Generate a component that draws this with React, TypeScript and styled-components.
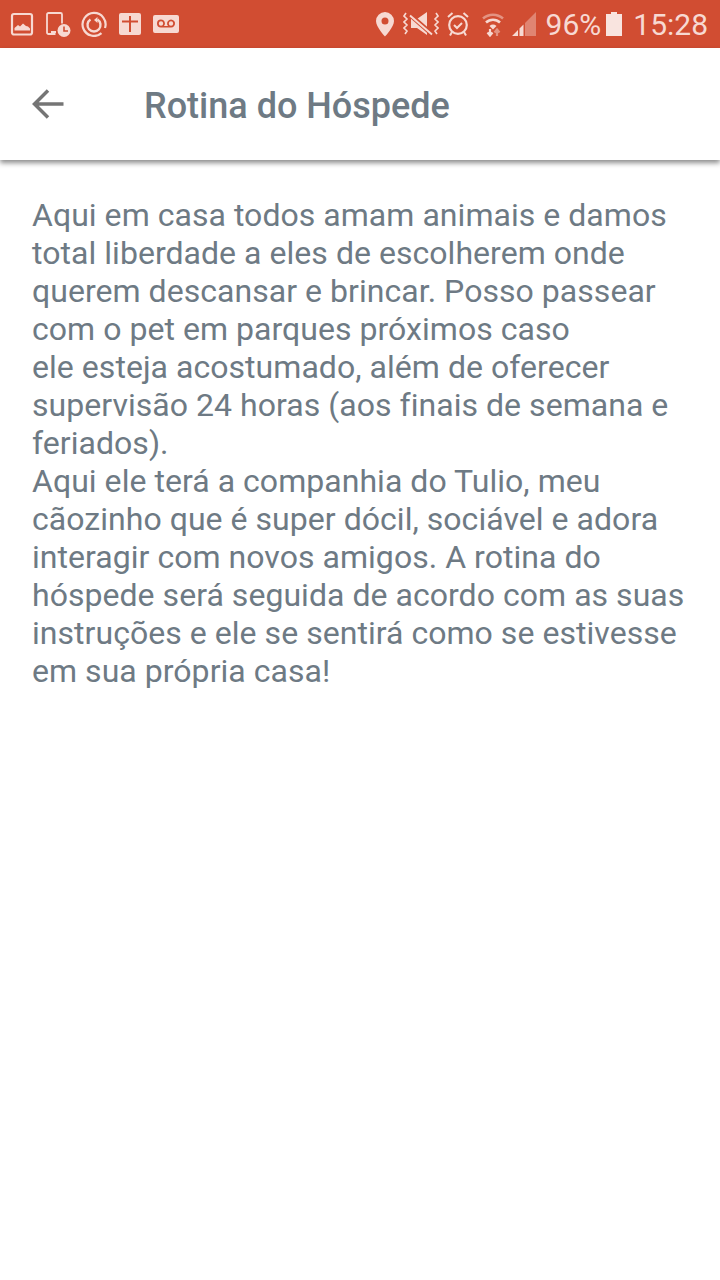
import React from 'react'
import styled, { createGlobalStyle } from 'styled-components'

const GlobalStyle = createGlobalStyle`
  html, body {
    margin: 0;
    padding: 0;
    background: #fff;
    font-family: Roboto, "Noto Sans", sans-serif;
  }
`

const ICON_COLOR = '#f7d9d2'
const BAR_COLOR = '#d14d32'
const TEXT_COLOR = '#6e7a84'

const App = () => (
  <Page>
    <GlobalStyle />
    <StatusBar>
      <StatusLeft>
        <svg width="24" height="26" viewBox="0 0 24 26">
          <rect x="2" y="3" width="20" height="20.500" rx="2" fill="none" stroke={ICON_COLOR} strokeWidth="2.200" />
          <path d="M4.500 19.500v-2.500l3.500-3 2 1.500 3-3 3 2.500 2 .5 2 2v2z" fill={ICON_COLOR} />
        </svg>
        <svg width="27" height="26" viewBox="0 0 27 26">
          <path d="M11.500 23H4.500A1.500 1.500 0 0 1 3 21.500V3.500A1.500 1.500 0 0 1 4.500 2h12A1.500 1.500 0 0 1 18 3.500v9" fill="none" stroke={ICON_COLOR} strokeWidth="1.800" />
          <rect x="7" y="20" width="5" height="2" fill={ICON_COLOR} />
          <circle cx="20" cy="19.500" r="6.500" fill={ICON_COLOR} />
          <path d="M20 15.500v4.500h4" fill="none" stroke={BAR_COLOR} strokeWidth="1.600" />
        </svg>
        <svg width="26" height="26" viewBox="0 0 26 26">
          <path d="M20.500 22.200A11.500 11.500 0 1 1 24 17" fill="none" stroke={ICON_COLOR} strokeWidth="2.200" />
          <path d="M9.500 8.500a6.500 6.500 0 1 0 7 0" fill="none" stroke={ICON_COLOR} strokeWidth="2.400" />
          <path d="M16.500 6v6l-3.500-3z" fill={ICON_COLOR} />
        </svg>
        <svg width="24" height="26" viewBox="0 0 24 26">
          <path
            fillRule="evenodd"
            d="M4 2h18a2 2 0 0 1 2 2v18a2 2 0 0 1-2 2H4a2 2 0 0 1-2-2V4a2 2 0 0 1 2-2zM12 5v4.500H5v2h7V21h2v-9.500h7v-2h-7V5z"
            fill={ICON_COLOR}
          />
        </svg>
        <svg width="28" height="18" viewBox="0 0 28 18">
          <path
            fillRule="evenodd"
            d="M4 0h22a2 2 0 0 1 2 2v14a2 2 0 0 1-2 2H4a2 2 0 0 1-2-2V2a2 2 0 0 1 2-2zM10 4.500a4 4 0 1 0 0 8h10a4 4 0 1 0-3-1.400h-4A4 4 0 0 0 10 4.500zM10 6.300a2.200 2.200 0 1 1 0 4.400 2.200 2.200 0 0 1 0-4.400zM20 6.300a2.200 2.200 0 1 1 0 4.400 2.200 2.200 0 0 1 0-4.400z"
            fill={ICON_COLOR}
          />
        </svg>
      </StatusLeft>
      <StatusRight>
        <svg width="20" height="26" viewBox="0 0 20 26">
          <path
            fillRule="evenodd"
            d="M10 1a9 9 0 0 1 9 9c0 6-9 15.500-9 15.500S1 16 1 10a9 9 0 0 1 9-9zm0 5.500a3.500 3.500 0 1 0 0 7 3.500 3.500 0 0 0 0-7z"
            fill={ICON_COLOR}
          />
        </svg>
        <svg width="36" height="26" viewBox="0 0 36 26">
          <path d="M3 2L1 5l3 3-3 3 3 3-3 3 3 3-2 3M33 2l2 3-3 3 3 3-3 3 3 3-3 3 2 3" fill="none" stroke={ICON_COLOR} strokeWidth="1.600" />
          <path d="M8 8h6l10-7v23l-10-7H8z" fill={ICON_COLOR} />
          <path d="M6 3l24 21" stroke={BAR_COLOR} strokeWidth="4.500" />
          <path d="M7 4.500l22 19" stroke={ICON_COLOR} strokeWidth="2" />
        </svg>
        <svg width="27" height="26" viewBox="0 0 27 26">
          <circle cx="11" cy="14" r="8.800" fill="none" stroke={ICON_COLOR} strokeWidth="2.200" />
          <path d="M7 14l3 3 5-5" fill="none" stroke={ICON_COLOR} strokeWidth="2" />
          <path d="M1 6l4.500-4M21 6l-4.500-4M5 21l-2 3.500M17 21l2 3.500" stroke={ICON_COLOR} strokeWidth="2" />
        </svg>
        <svg width="22" height="26" viewBox="0 0 22 26">
          <path d="M1 7.500a15 15 0 0 1 20 0" fill="none" stroke={ICON_COLOR} strokeOpacity="0.5" strokeWidth="2.500" />
          <path d="M4 11.500a10 10 0 0 1 14 0" fill="none" stroke={ICON_COLOR} strokeWidth="2.500" />
          <path d="M7.500 15a5.500 5.500 0 0 1 7 0L11 18.500z" fill={ICON_COLOR} />
          <path d="M8 18v6M5.500 21.500L8 24.500l2.500-3" fill="none" stroke={ICON_COLOR} strokeWidth="2.200" />
          <path d="M15 25v-6M12.500 21.500L15 18.500l2.500 3" fill="none" stroke={ICON_COLOR} strokeOpacity="0.5" strokeWidth="2.200" />
        </svg>
        <svg width="24" height="24" viewBox="0 0 24 24">
          <path d="M13 11V24H24V0z" fill={ICON_COLOR} fillOpacity="0.4" />
          <path d="M0 24l6-6v6zM7.500 16.500l4-4V24h-4z" fill={ICON_COLOR} />
        </svg>
        <Percent>96%</Percent>
        <svg width="16" height="24" viewBox="0 0 16 24">
          <path d="M5 0h6v2h5v22H0V2h5z" fill="#f9e4df" />
        </svg>
        <Clock>15:28</Clock>
      </StatusRight>
    </StatusBar>
    <Header>
      <BackButton aria-label="Voltar">
        <svg width="36" height="36" viewBox="0 0 36 36">
          <path d="M33.500 18H5M18 4.500L4.500 18 18 31.500" fill="none" stroke="#757575" strokeWidth="3.500" />
        </svg>
      </BackButton>
      <Title>Rotina do Hóspede</Title>
    </Header>
    <Body>
      Aqui em casa todos amam animais e damos total liberdade a eles de escolherem onde querem descansar e brincar.
      Posso passear com o pet em parques próximos caso
      <br />
      ele esteja acostumado, além de oferecer supervisão 24 horas (aos finais de semana e feriados).
      <br />
      Aqui ele terá a companhia do Tulio, meu cãozinho que é super dócil, sociável e adora interagir com novos amigos.
      A rotina do hóspede será seguida de acordo com as suas instruções e ele se sentirá como se estivesse em sua
      própria casa!
    </Body>
  </Page>
)

const Page = styled.div`
  width: 720px;
  height: 1280px;
  overflow: hidden;
  background: #fff;
`

const StatusBar = styled.div`
  height: 48px;
  box-sizing: border-box;
  display: flex;
  align-items: center;
  justify-content: space-between;
  padding: 0 12px 0 10px;
  background: ${BAR_COLOR};
`

const StatusLeft = styled.div`
  display: flex;
  align-items: center;
  gap: 10px;
`

const StatusRight = styled.div`
  display: flex;
  align-items: center;
  gap: 8px;
`

const Percent = styled.span`
  font-size: 30px;
  color: ${ICON_COLOR};
  margin: 0 -3px 0 2px;
`

const Clock = styled.span`
  font-size: 30px;
  color: ${ICON_COLOR};
  margin-left: 3px;
`

const Header = styled.header`
  height: 112px;
  box-sizing: border-box;
  padding: 3px 0 0 30px;
  display: flex;
  align-items: center;
  background: #fff;
  box-shadow: 0 3px 5px rgba(0, 0, 0, 0.45);
  position: relative;
`

const BackButton = styled.button`
  width: 36px;
  height: 36px;
  padding: 0;
  border: 0;
  background: none;
  display: flex;
  margin: -3px 78px 0 0;
`

const Title = styled.h1`
  margin: 0;
  font-size: 36px;
  font-weight: 500;
  color: ${TEXT_COLOR};
`

const Body = styled.p`
  margin: 0;
  padding: 36px 32px 0;
  font-size: 32px;
  line-height: 38px;
  letter-spacing: 0.04px;
  color: ${TEXT_COLOR};
`

export default App
